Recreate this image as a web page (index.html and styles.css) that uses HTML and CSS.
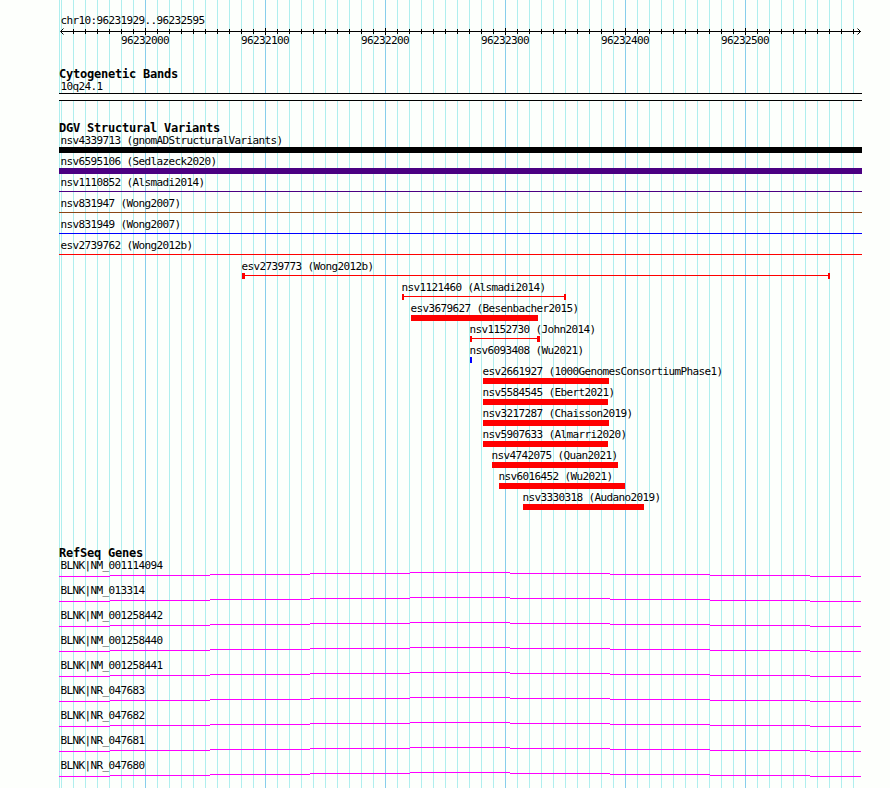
FILE: index.html
```html
<!DOCTYPE html>
<html>

<head>
	<meta charset="utf-8">
	<title>chr10:96231929..96232595</title>
	<link rel="stylesheet" href="styles.css">
</head>

<body>
	<div class="panel">
		<div class="region">
			<div class="label">chr10:96231929..96232595</div>
			<svg class="ruler" width="803" height="7" viewBox="0 0 803 7">
				<path class="axis" d="M2 3.5H802" />
				<path class="minor" d="M14 3.5H796" />
				<path class="major" d="M86 3.5H690" />
				<path class="arrow" d="M4.5 0.5L1.5 3.5L4.5 6.5M798.5 0.5L801.5 3.5L798.5 6.5" />
			</svg>
			<div class="numbers">
				<span>96232000</span>
				<span>96232100</span>
				<span>96232200</span>
				<span>96232300</span>
				<span>96232400</span>
				<span>96232500</span>
			</div>
		</div>

		<div class="track cyto">
			<h2>Cytogenetic Bands</h2>
			<div class="label">10q24.1</div>
			<div class="band"></div>
		</div>

		<div class="track variants">
			<h2>DGV Structural Variants</h2>
			<div class="feature full"><div class="label">nsv4339713 (gnomADStructuralVariants)</div><div class="bar black"></div></div>
			<div class="feature full"><div class="label">nsv6595106 (Sedlazeck2020)</div><div class="bar indigo"></div></div>
			<div class="feature full"><div class="label">nsv1110852 (Alsmadi2014)</div><div class="bar line indigo"></div></div>
			<div class="feature full"><div class="label">nsv831947 (Wong2007)</div><div class="bar line brown"></div></div>
			<div class="feature full"><div class="label">nsv831949 (Wong2007)</div><div class="bar line blue"></div></div>
			<div class="feature full"><div class="label">esv2739762 (Wong2012b)</div><div class="bar line"></div></div>
			<div class="feature" style="margin-left:183px;width:588px"><div class="label">esv2739773 (Wong2012b)</div><div class="bar line capped wide-left"></div></div>
			<div class="feature" style="margin-left:343px;width:164px"><div class="label">nsv1121460 (Alsmadi2014)</div><div class="bar line capped"></div></div>
			<div class="feature" style="margin-left:352px;width:127px"><div class="label">esv3679627 (Besenbacher2015)</div><div class="bar"></div></div>
			<div class="feature" style="margin-left:411px;width:70px"><div class="label">nsv1152730 (John2014)</div><div class="bar line capped wide-right"></div></div>
			<div class="feature" style="margin-left:411px;width:2px"><div class="label">nsv6093408 (Wu2021)</div><div class="bar blue"></div></div>
			<div class="feature" style="margin-left:424px;width:126px"><div class="label">esv2661927 (1000GenomesConsortiumPhase1)</div><div class="bar"></div></div>
			<div class="feature" style="margin-left:424px;width:125px"><div class="label">nsv5584545 (Ebert2021)</div><div class="bar"></div></div>
			<div class="feature" style="margin-left:424px;width:126px"><div class="label">nsv3217287 (Chaisson2019)</div><div class="bar"></div></div>
			<div class="feature" style="margin-left:424px;width:125px"><div class="label">nsv5907633 (Almarri2020)</div><div class="bar"></div></div>
			<div class="feature" style="margin-left:433px;width:126px"><div class="label">nsv4742075 (Quan2021)</div><div class="bar"></div></div>
			<div class="feature" style="margin-left:440px;width:126px"><div class="label">nsv6016452 (Wu2021)</div><div class="bar"></div></div>
			<div class="feature" style="margin-left:464px;width:121px"><div class="label">nsv3330318 (Audano2019)</div><div class="bar"></div></div>
		</div>

		<div class="track genes">
			<h2>RefSeq Genes</h2>
			<svg width="0" height="0" class="defs">
				<!-- stepped intron line, shared by all transcripts -->
				<path id="intron" d="M0 4.5H51M51 3.5H151M151 2.5H251M251 1.5H351M351 0.5H451M451 1.5H551M551 2.5H651M651 3.5H751M751 4.5H802" />
			</svg>
			<div class="gene"><div class="label">BLNK|NM_001114094</div><svg class="intron"><use href="#intron" /></svg></div>
			<div class="gene"><div class="label">BLNK|NM_013314</div><svg class="intron"><use href="#intron" /></svg></div>
			<div class="gene"><div class="label">BLNK|NM_001258442</div><svg class="intron"><use href="#intron" /></svg></div>
			<div class="gene"><div class="label">BLNK|NM_001258440</div><svg class="intron"><use href="#intron" /></svg></div>
			<div class="gene"><div class="label">BLNK|NM_001258441</div><svg class="intron"><use href="#intron" /></svg></div>
			<div class="gene"><div class="label">BLNK|NR_047683</div><svg class="intron"><use href="#intron" /></svg></div>
			<div class="gene"><div class="label">BLNK|NR_047682</div><svg class="intron"><use href="#intron" /></svg></div>
			<div class="gene"><div class="label">BLNK|NR_047681</div><svg class="intron"><use href="#intron" /></svg></div>
			<div class="gene"><div class="label">BLNK|NR_047680</div><svg class="intron"><use href="#intron" /></svg></div>
		</div>
	</div>
</body>

</html>
```

FILE: styles.css
```css
body {
	margin: 0;
	background: #fdfffc;
	color: #000;
	font-family: "DejaVu Sans Mono", monospace;
}

/* Grid lines: left edge, every 100 bases, every 10 bases */
.panel {
	box-sizing: border-box;
	width: 803px;
	height: 788px;
	margin-left: 59px;
	padding-top: 14px;
	overflow: hidden;
	background:
		linear-gradient(#afeeee, #afeeee) 0 0 / 1px 100% no-repeat,
		repeating-linear-gradient(90deg, transparent 0 86px, #87ceeb 86px 87px, transparent 87px 120px),
		repeating-linear-gradient(90deg, transparent 0 2px, #afeeee 2px 3px, transparent 3px 12px);
}

.label {
	height: 13px;
	padding-left: 1.5px;
	font-size: 11px;
	line-height: 13px;
	letter-spacing: -0.622px;
	white-space: nowrap;
}

h2 {
	height: 13px;
	margin: 0;
	font-size: 12px;
	line-height: 15px;
	letter-spacing: -0.224px;
	white-space: nowrap;
}

svg {
	display: block;
	fill: none;
}

/* Ruler */
.region {
	height: 53px;
}

.ruler {
	margin-top: 1px;
	stroke: #000;
}

.minor {
	stroke-width: 5;
	stroke-dasharray: 1 11;
}

.major {
	stroke-width: 7;
	stroke-dasharray: 1 119;
}

.numbers {
	display: flex;
	margin: -1px 0 0 26px;
	font-size: 11px;
	line-height: 13px;
	letter-spacing: -0.622px;
}

.numbers span {
	flex: 0 0 120px;
	text-align: center;
}

/* Tracks */
.cyto {
	height: 54px;
}

.band {
	height: 6px;
	border-top: 1px solid #000;
	border-bottom: 1px solid #000;
	background: #fdfffc;
}

.variants {
	height: 425px;
}

.feature {
	height: 21px;
}

.feature .label {
	margin-left: -2px;
}

.feature.full .label {
	margin-left: 0;
}

.bar {
	height: 6px;
	color: #f00;
	background: currentColor;
}

.line {
	background: linear-gradient(currentColor, currentColor) 0 2px / 100% 1px no-repeat;
}

.capped {
	box-sizing: border-box;
	border: 0 solid currentColor;
	border-width: 0 2px;
}

.wide-left {
	border-left-width: 3px;
}

.wide-right {
	border-right-width: 3px;
}

.black {
	color: #000;
}

.indigo {
	color: #4b0082;
}

.brown {
	color: #8b4513;
}

.blue {
	color: #00f;
}

/* Genes */
.defs {
	position: absolute;
}

.gene {
	height: 25px;
}

.intron {
	width: 803px;
	height: 5px;
	stroke: #f0f;
}
```
